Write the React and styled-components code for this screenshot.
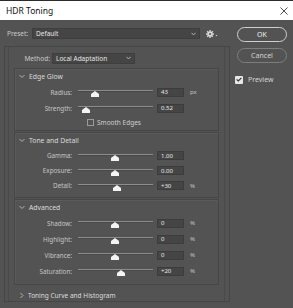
import styled, { createGlobalStyle } from "styled-components"

const Global = createGlobalStyle`
  body { margin: 0; background: #535353; }
  * { box-sizing: border-box; }
`

const Window = styled.div`
  width: 293px;
  height: 308px;
  background: #535353;
  border-top: 1px solid #2b2b2b;
  font-family: "Noto Sans", "Open Sans", sans-serif;
  overflow: hidden;
`

const TitleBar = styled.div`
  height: 19px;
  background: #ffffff;
  display: flex;
  align-items: center;
  justify-content: space-between;
  padding: 0 5px 0 6px;
  font-size: 8.5px;
  color: #111;
`

const Main = styled.div`
  display: flex;
  padding: 8px 0 0 4px;
`

const LeftCol = styled.div`
  width: 226px;
  display: flex;
  flex-direction: column;
`

const RightCol = styled.div`
  width: 50px;
  margin-left: 7px;
  display: flex;
  flex-direction: column;
  margin-top: -1px;
`

const PresetRow = styled.div`
  height: 11px;
  display: flex;
  align-items: center;
  padding-left: 3px;
  font-size: 6.5px;
  color: #c9c9c9;
`

const Select = styled.div`
  width: ${p => p.$w}px;
  height: ${p => p.$h || 11}px;
  margin-left: ${p => p.$ml || 0}px;
  background: #454545;
  border: 1px solid #3e3e3e;
  display: flex;
  align-items: center;
  justify-content: space-between;
  padding: 0 3px;
  color: #e6e6e6;
  font-size: 6.5px;
`

const Frame = styled.div`
  margin-top: 7px;
  height: 256px;
  border: 1px solid #464646;
  padding: 0 4px 0 3px;
`

const Inner = styled.div`
  height: 100%;
  border-left: 1px solid #4a4a4a;
  border-right: 1px solid #4a4a4a;
  padding: 1px 5px 0 5px;
`

const MethodRow = styled.div`
  height: 20px;
  display: flex;
  align-items: center;
  font-size: 6.5px;
  color: #c9c9c9;
  margin-left: -5px;
`

const MethodLabel = styled.span`
  width: 41px;
  text-align: right;
  margin-right: 2px;
`

const Section = styled.div`
  border: 1px solid #464646;
  box-shadow: inset 1px 1px 0 #5a5a5a;
  padding-bottom: ${p => p.$pb}px;
  margin-bottom: 1px;
`

const Header = styled.div`
  height: 15px;
  display: flex;
  align-items: center;
  padding-left: 4px;
  font-size: 6.8px;
  color: #dcdcdc;
  gap: 4px;
`

const Row = styled.div`
  height: ${p => p.$h || 16}px;
  display: flex;
  align-items: center;
  font-size: 6.3px;
  color: #c6c6c6;
`

const Label = styled.span`
  width: 57px;
  text-align: right;
  margin-right: 6px;
`

const SliderBox = styled.div`
  position: relative;
  width: 75px;
  height: 100%;
`

const Track = styled.div`
  position: absolute;
  left: 0;
  right: 0;
  top: 6px;
  height: 2px;
  background: #8d8d8d;
  border-bottom: 1px solid #484848;
`

const Thumb = styled.svg`
  position: absolute;
  top: 7px;
  width: 8px;
  height: 6px;
  margin-left: -4px;
`

const Input = styled.div`
  width: 27px;
  height: 9px;
  margin-left: 4px;
  background: #454545;
  border: 1px solid #3c3c3c;
  color: #e8e8e8;
  font-size: 6px;
  padding-left: 3px;
  display: flex;
  align-items: center;
`

const Unit = styled.span`
  margin-left: 6px;
  font-size: 6px;
  color: #c6c6c6;
`

const CheckRow = styled.div`
  height: 12px;
  display: flex;
  align-items: center;
  padding-left: 72px;
  font-size: 6.5px;
  color: #cfcfcf;
  gap: 3px;
`

const Box = styled.div`
  width: 7px;
  height: 7px;
  border: 1px solid #9a9a9a;
  background: transparent;
`

const Collapsed = styled.div`
  height: 19px;
  display: flex;
  align-items: center;
  padding-left: 5px;
  gap: 3px;
  font-size: 6.5px;
  color: #dcdcdc;
`

const Button = styled.div`
  height: 15px;
  width: 50px;
  border-radius: 8px;
  border: ${p => p.$primary ? "1.5px solid #cfcfcf" : "1px solid #7e7e7e"};
  color: ${p => p.$primary ? "#f2f2f2" : "#d4d4d4"};
  display: flex;
  align-items: center;
  justify-content: center;
  font-size: 7px;
  margin-bottom: 6px;
`

const Preview = styled.div`
  margin-top: 6px;
  display: flex;
  align-items: center;
  gap: 5px;
  font-size: 7px;
  color: #d4d4d4;
  margin-left: -2px;
`

const CheckedBox = styled.div`
  width: 8px;
  height: 8px;
  background: #e8e8e8;
  border-radius: 1px;
  display: flex;
  align-items: center;
  justify-content: center;
`

function Chevron({ open }) {
  return (
    <svg width="6" height="5" viewBox="0 0 6 5">
      {open
        ? <path d="M0.5 1 L3 3.5 L5.5 1" stroke="#bdbdbd" strokeWidth="0.9" fill="none" />
        : <path d="M1.5 0 L4 2.5 L1.5 5" stroke="#bdbdbd" strokeWidth="0.9" fill="none" />}
    </svg>
  )
}

function Caret() {
  return (
    <svg width="5" height="4" viewBox="0 0 5 4">
      <path d="M0.5 0.8 L2.5 3 L4.5 0.8" stroke="#bbbbbb" strokeWidth="0.9" fill="none" />
    </svg>
  )
}

function Slider({ at }) {
  return (
    <SliderBox>
      <Track />
      <Thumb viewBox="0 0 8 6" style={{ left: at }}>
        <path d="M4 0 L8 3 L8 6 L0 6 L0 3 Z" fill="#f4f4f4" />
      </Thumb>
    </SliderBox>
  )
}

function SliderRow({ label, at, value, unit }) {
  return (
    <Row>
      <Label>{label}</Label>
      <Slider at={at} />
      <Input>{value}</Input>
      {unit && <Unit>{unit}</Unit>}
    </Row>
  )
}

function Gear() {
  return (
    <svg width="13" height="8" viewBox="0 0 13 8" style={{ marginLeft: 6 }}>
      <g fill="#d8d8d8">
        <circle cx="4" cy="4" r="2.6" />
        <rect x="3.3" y="0" width="1.4" height="8" />
        <rect x="0" y="3.3" width="8" height="1.4" />
        <rect x="3.3" y="0" width="1.4" height="8" transform="rotate(45 4 4)" />
        <rect x="3.3" y="0" width="1.4" height="8" transform="rotate(-45 4 4)" />
      </g>
      <circle cx="4" cy="4" r="1" fill="#535353" />
      <path d="M9.5 5 L11.5 5 L10.5 6.2 Z" fill="#d8d8d8" />
    </svg>
  )
}

export default function App() {
  return (
    <>
      <Global />
      <Window>
        <TitleBar>
          <span>HDR Toning</span>
          <svg width="8" height="8" viewBox="0 0 8 8">
            <path d="M0.5 0.5 L7.5 7.5 M7.5 0.5 L0.5 7.5" stroke="#222" strokeWidth="0.8" />
          </svg>
        </TitleBar>
        <Main>
          <LeftCol>
            <PresetRow>
              <span>Preset:</span>
              <Select $w={168} $h={11} $ml={4}>
                <span>Default</span>
                <Caret />
              </Select>
              <Gear />
            </PresetRow>
            <Frame>
              <Inner>
                <MethodRow>
                  <MethodLabel>Method:</MethodLabel>
                  <Select $w={83} $h={11}>
                    <span>Local Adaptation</span>
                    <Caret />
                  </Select>
                </MethodRow>

                <Section $pb={2}>
                  <Header><Chevron open />Edge Glow</Header>
                  <SliderRow label="Radius:" at={17} value="43" unit="px" />
                  <SliderRow label="Strength:" at={8} value="0.52" />
                  <CheckRow><Box />Smooth Edges</CheckRow>
                </Section>

                <Section $pb={4}>
                  <Header><Chevron open />Tone and Detail</Header>
                  <Row $h={15}><Label>Gamma:</Label><Slider at={37} /><Input>1.00</Input></Row>
                  <Row $h={15}><Label>Exposure:</Label><Slider at={37} /><Input>0.00</Input></Row>
                  <Row $h={15}><Label>Detail:</Label><Slider at={39} /><Input>+30</Input><Unit>%</Unit></Row>
                </Section>

                <Section $pb={5}>
                  <Header><Chevron open />Advanced</Header>
                  <SliderRow label="Shadow:" at={37} value="0" unit="%" />
                  <SliderRow label="Highlight:" at={37} value="0" unit="%" />
                  <SliderRow label="Vibrance:" at={37} value="0" unit="%" />
                  <SliderRow label="Saturation:" at={43} value="+20" unit="%" />
                </Section>

                <Collapsed><Chevron />Toning Curve and Histogram</Collapsed>
              </Inner>
            </Frame>
          </LeftCol>
          <RightCol>
            <Button $primary>OK</Button>
            <Button>Cancel</Button>
            <Preview>
              <CheckedBox>
                <svg width="6" height="5" viewBox="0 0 6 5">
                  <path d="M0.6 2.4 L2.3 4 L5.4 0.8" stroke="#333" strokeWidth="1.2" fill="none" />
                </svg>
              </CheckedBox>
              Preview
            </Preview>
          </RightCol>
        </Main>
      </Window>
    </>
  )
}
